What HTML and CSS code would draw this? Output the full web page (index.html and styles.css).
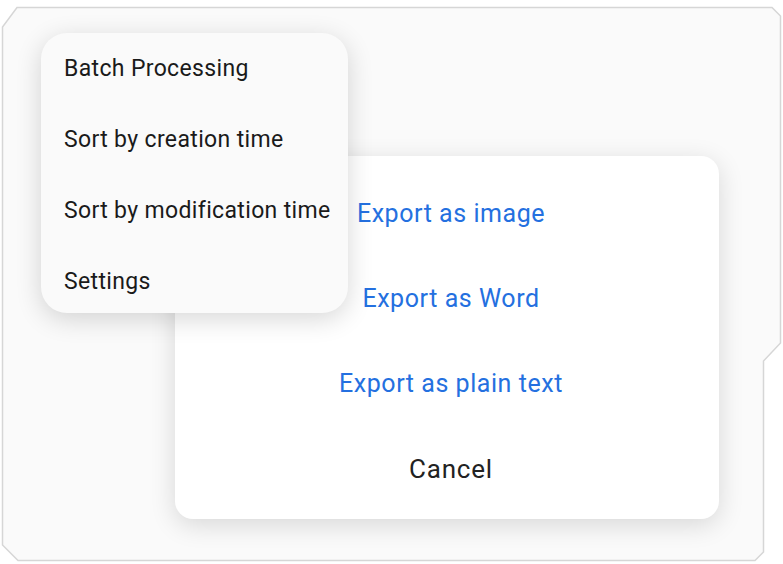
FILE: index.html
```html
<!DOCTYPE html>
<html lang="en">
<head>
  <meta charset="UTF-8">
  <meta name="viewport" content="width=device-width, initial-scale=1.0">
  <title>Export Menu</title>
  <link rel="stylesheet" href="styles.css">
</head>
<body>
  <div class="stage">
    <!-- Device frame -->
    <svg class="frame" width="783" height="564" viewBox="0 0 783 564">
      <polygon points="17,7.5 772,7.5 780.5,16 780.5,343 763.5,361 763.5,552 755,560.5 18,560.5 2.5,545 2.5,27"
               fill="#fafafa" stroke="#d6d6d6" stroke-width="1.5" />
    </svg>

    <!-- Export dialog -->
    <div class="dialog">
      <div class="dialog-item link">Export as image</div>
      <div class="dialog-item link">Export as Word</div>
      <div class="dialog-item link">Export as plain text</div>
      <div class="dialog-item cancel">Cancel</div>
    </div>

    <!-- Overflow menu -->
    <ul class="menu">
      <li>Batch Processing</li>
      <li>Sort by creation time</li>
      <li>Sort by modification time</li>
      <li>Settings</li>
    </ul>
  </div>
</body>
</html>
```

FILE: styles.css
```css
/* General Styles */
body {
  margin: 0;
  padding: 0;
  background: #fff;
  font-family: Roboto, "Noto Sans", Arial, sans-serif;
}

.stage {
  position: relative;
  width: 783px;
  height: 564px;
  overflow: hidden;
}

.frame {
  position: absolute;
  top: 0;
  left: 0;
}

/* Overflow Menu */
.menu {
  position: absolute;
  top: 33px;
  left: 41px;
  width: 307px;
  height: 280px;
  margin: 0;
  padding: 0;
  overflow: hidden;
  list-style: none;
  box-sizing: border-box;
  background: #fafafa;
  border-radius: 26px;
  box-shadow: 0 6px 26px rgba(0, 0, 0, 0.16);
}

.menu li {
  display: flex;
  align-items: center;
  height: 71px;
  padding-left: 23px;
  font-size: 23px;
  letter-spacing: 0.35px;
  color: #1a1a1a;
  white-space: nowrap;
}

/* Export Dialog */
.dialog {
  position: absolute;
  top: 156px;
  left: 175px;
  width: 544px;
  height: 363px;
  box-sizing: border-box;
  padding: 15px 0 8px 8px;
  background: #fff;
  border-radius: 18px;
  box-shadow: 0 6px 26px rgba(0, 0, 0, 0.14);
}

.dialog-item {
  display: flex;
  align-items: center;
  justify-content: center;
  height: 85px;
  font-size: 25px;
  letter-spacing: 0.55px;
  color: #222;
}

.dialog-item.link {
  color: #2470e0;
}

.dialog-item.cancel {
  font-size: 26px;
  letter-spacing: 0.8px;
}
```
